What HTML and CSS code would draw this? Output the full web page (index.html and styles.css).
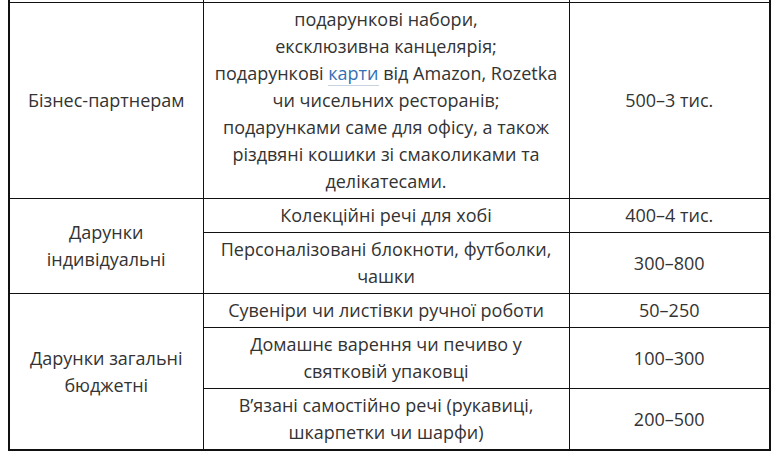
FILE: index.html
```html
<!DOCTYPE html>
<html lang="uk">
<head>
<meta charset="utf-8">
<title>Подарунки</title>
<link rel="stylesheet" href="styles.css">
</head>
<body>
<div class="wrap">
<table class="gifts">
  <colgroup>
    <col class="c1">
    <col class="c2">
    <col class="c3">
  </colgroup>
  <tbody>
    <tr class="cut"><td></td><td></td><td></td></tr>
    <tr>
      <td>Бізнес-партнерам</td>
      <td>подарункові набори,<br>ексклюзивна канцелярія;<br>подарункові <a class="link" href="#">карти</a> від Amazon, Rozetka<br>чи чисельних ресторанів;<br>подарунками саме для офісу, а також<br>різдвяні кошики зі смаколиками та<br>делікатесами.</td>
      <td>500–3 тис.</td>
    </tr>
    <tr>
      <td rowspan="2">Дарунки<br>індивідуальні</td>
      <td>Колекційні речі для хобі</td>
      <td>400–4 тис.</td>
    </tr>
    <tr>
      <td>Персоналізовані блокноти, футболки, чашки</td>
      <td>300–800</td>
    </tr>
    <tr>
      <td rowspan="3">Дарунки загальні<br>бюджетні</td>
      <td>Сувеніри чи листівки ручної роботи</td>
      <td>50–250</td>
    </tr>
    <tr>
      <td>Домашнє варення чи печиво у святковій упаковці</td>
      <td>100–300</td>
    </tr>
    <tr>
      <td>В’язані самостійно речі (рукавиці, шкарпетки чи шарфи)</td>
      <td>200–500</td>
    </tr>
  </tbody>
</table>
</div>
</body>
</html>
```
FILE: styles.css
```css
html, body {
  margin: 0;
  padding: 0;
  background: #ffffff;
}
body {
  font-family: "Open Sans", "Noto Sans", sans-serif;
  font-size: 18px;
  color: #333333;
}
.wrap {
  padding: 0 8px;
  overflow: hidden;
}
.gifts {
  width: 100%;
  border-collapse: collapse;
  table-layout: fixed;
  border: 2px solid #111111;
  margin-top: -8px;
}
.c1 { width: 194px; }
.c2 { width: 366px; }
.c3 { width: auto; }
.gifts td {
  border: 1px solid #111111;
  padding: 3px 10px;
  line-height: 27px;
  text-align: center;
  vertical-align: middle;
}
.gifts .cut td {
  height: 8px;
  padding: 0;
  line-height: 0;
}
.link {
  color: #3470b4;
  text-decoration: none;
  border-bottom: 1px solid #c9d4e2;
}
```
